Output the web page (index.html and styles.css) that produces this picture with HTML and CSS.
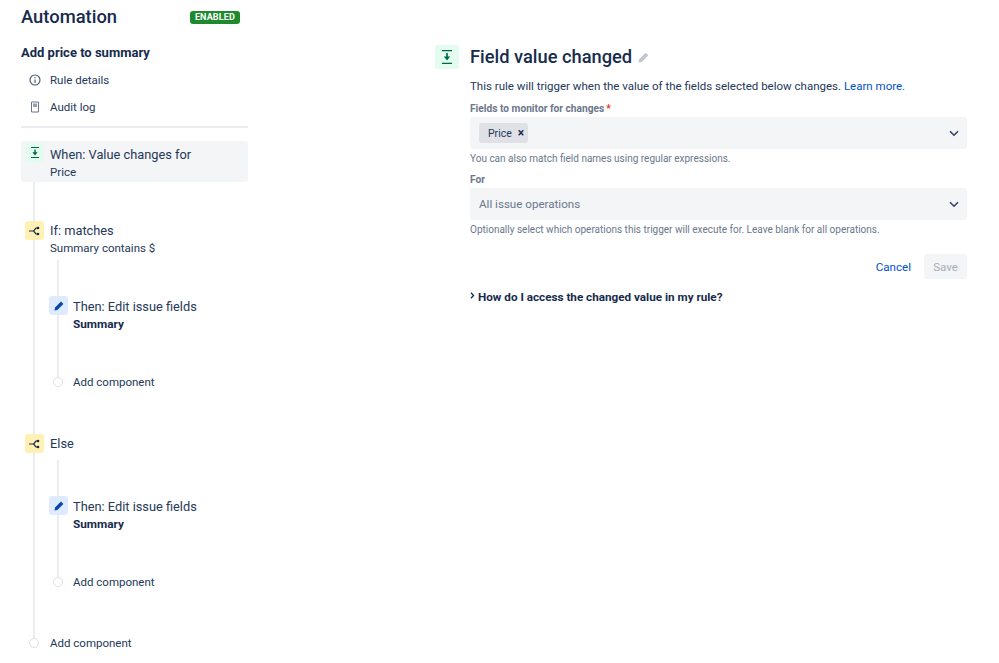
FILE: index.html
```html
<!DOCTYPE html>
<html lang="en">
  <head>
    <meta charset="UTF-8" />
    <meta name="viewport" content="width=device-width, initial-scale=1.0" />
    <title>Automation</title>
    <link rel="stylesheet" href="styles.css">
  </head>

  <body>
    <div class="page">
      <!-- rule outline -->
      <aside class="sidebar">
        <div class="sidebar-head">
          <h1>Automation</h1>
          <span class="badge">ENABLED</span>
        </div>
        <h2>Add price to summary</h2>
        <ul class="nav">
          <li>
            <svg width="12" height="12" viewBox="0 0 12 12" fill="none" stroke="#42526e" stroke-width="1.1">
              <circle cx="6" cy="6" r="5"/>
              <path d="M6 5.4V9M6 3v1.2"/>
            </svg>
            Rule details
          </li>
          <li>
            <svg width="12" height="12" viewBox="0 0 12 12" fill="none" stroke="#6b778c" stroke-width="1">
              <path d="M2.500 1h7v10h-7z"/>
              <path d="M4 2.500h4V6H4z" fill="#97a0af" stroke="none"/>
            </svg>
            Audit log
          </li>
        </ul>
        <hr />

        <div class="timeline">
          <div class="step step-active">
            <span class="icon icon-green">
              <svg width="10" height="11" viewBox="0 0 10 11" fill="#006644">
                <path d="M1 0h8v1H1zM1 10h8v1H1zM4.300 2.500h1.400v2.700H7.600L5 8.400 2.400 5.200h1.900z"/>
              </svg>
            </span>
            <div class="step-text">
              <div class="step-title">When: Value changes for</div>
              <div class="step-sub">Price</div>
            </div>
          </div>

          <div class="step step-if">
            <span class="icon icon-yellow">
              <svg width="11" height="10" viewBox="0 0 11 10" fill="none" stroke="#172b4d" stroke-width="1.200">
                <path d="M0 5h4.500M8.500 2H7L4.500 5 7 8h1.500"/>
                <circle cx="9" cy="2" r="1.300" fill="#172b4d" stroke="none"/>
                <circle cx="9" cy="8" r="1.300" fill="#172b4d" stroke="none"/>
              </svg>
            </span>
            <div>
              <div class="step-title">If: matches</div>
              <div class="step-sub">Summary contains $</div>
            </div>
          </div>
          <div class="branch">
            <div class="step">
              <span class="icon icon-blue">
                <svg width="10" height="10" viewBox="0 0 10 10" fill="#0747a6">
                  <path d="M7 .6l2.400 2.400-6 6L.5 9.500l.6-2.900z"/>
                </svg>
              </span>
              <div class="step-text">
                <div class="step-title">Then: Edit issue fields</div>
                <div class="step-sub step-bold">Summary</div>
              </div>
            </div>
            <div class="add add-inner"><span class="dot"></span>Add component</div>
          </div>

          <div class="step step-else">
            <span class="icon icon-yellow">
              <svg width="11" height="10" viewBox="0 0 11 10" fill="none" stroke="#172b4d" stroke-width="1.200">
                <path d="M0 5h4.500M8.500 2H7L4.500 5 7 8h1.500"/>
                <circle cx="9" cy="2" r="1.300" fill="#172b4d" stroke="none"/>
                <circle cx="9" cy="8" r="1.300" fill="#172b4d" stroke="none"/>
              </svg>
            </span>
            <div>
              <div class="step-title">Else</div>
            </div>
          </div>
          <div class="branch branch-else">
            <div class="step">
              <span class="icon icon-blue">
                <svg width="10" height="10" viewBox="0 0 10 10" fill="#0747a6">
                  <path d="M7 .6l2.400 2.400-6 6L.5 9.500l.6-2.900z"/>
                </svg>
              </span>
              <div class="step-text">
                <div class="step-title">Then: Edit issue fields</div>
                <div class="step-sub step-bold">Summary</div>
              </div>
            </div>
            <div class="add add-inner"><span class="dot"></span>Add component</div>
          </div>

          <div class="add add-outer"><span class="dot"></span>Add component</div>
        </div>
      </aside>

      <!-- trigger config -->
      <main class="panel">
        <span class="panel-icon">
          <svg width="12" height="14" viewBox="0 0 12 14" fill="#006644">
            <path d="M1 0h10v1.300H1zM1 12.700h10V14H1zM5.200 3h1.600v3.500h2.400L6 10.400 2.800 6.500h2.400z"/>
          </svg>
        </span>
        <div class="panel-body">
          <div class="panel-title">
            <h3>Field value changed</h3>
            <svg width="11" height="11" viewBox="0 0 10 10" fill="#c1c7d0">
              <path d="M7 .6l2.400 2.400-6 6L.5 9.500l.6-2.900z"/>
            </svg>
          </div>
          <p class="desc">This rule will trigger when the value of the fields selected below changes. <a href="#">Learn more.</a></p>

          <label class="label">Fields to monitor for changes<span class="req">*</span></label>
          <div class="select">
            <span class="tag">Price<span class="tag-x">&#215;</span></span>
            <svg class="chevron" width="10" height="7" viewBox="0 0 10 7" fill="none" stroke="#344563" stroke-width="1.600">
              <path d="M1 1.200l4 4 4-4"/>
            </svg>
          </div>
          <p class="hint">You can also match field names using regular expressions.</p>

          <label class="label">For</label>
          <div class="select">
            <span class="placeholder">All issue operations</span>
            <svg class="chevron" width="10" height="7" viewBox="0 0 10 7" fill="none" stroke="#344563" stroke-width="1.600">
              <path d="M1 1.200l4 4 4-4"/>
            </svg>
          </div>
          <p class="hint">Optionally select which operations this trigger will execute for. Leave blank for all operations.</p>

          <div class="actions">
            <a href="#" class="cancel">Cancel</a>
            <button type="button" class="save" disabled>Save</button>
          </div>

          <div class="expand">
            <svg class="expand-arrow" width="5" height="7" viewBox="0 0 5 7" fill="none" stroke="#172b4d" stroke-width="1.300">
              <path d="M1 .8l2.500 2.700L1 6.200"/>
            </svg>
            How do I access the changed value in my rule?
          </div>
        </div>
      </main>
    </div>
  </body>
</html>
```

FILE: styles.css
```css
* {
  box-sizing: border-box;
  margin: 0;
  padding: 0;
}

html,
body {
  height: 100%;
  overflow: hidden;
}

body {
  background: white;
  color: #172b4d;
  font-family: Roboto, "Liberation Sans", sans-serif;
  font-size: 13px;
}

a {
  color: #0052cc;
  text-decoration: none;
}

.page {
  display: flex;
  gap: 187px;
  padding-left: 21px;
}

/* sidebar */
.sidebar {
  width: 227px;
  flex-shrink: 0;
}

.sidebar-head {
  display: flex;
  align-items: center;
  justify-content: space-between;
  padding: 0 8px 2px 0;
  height: 36px;
}

.sidebar-head h1 {
  font-size: 18.400px;
  font-weight: 500;
  line-height: 22px;
}

.badge {
  background: #1f8a2d;
  color: white;
  border-radius: 3px;
  padding: 0 5px;
  font-size: 9px;
  font-weight: 700;
  line-height: 13px;
  letter-spacing: 0.15px;
}

.sidebar h2 {
  margin-top: 9px;
  font-size: 13px;
  font-weight: 700;
  line-height: 16px;
}

.nav {
  list-style: none;
  margin-top: 5px;
}

.nav li {
  display: flex;
  align-items: center;
  gap: 9px;
  height: 27px;
  padding-left: 8px;
  font-size: 11.500px;
  color: #253858;
}

hr {
  border: 0;
  height: 2px;
  background: #ebecf0;
  margin-top: 6px;
}

/* timeline */
.timeline {
  position: relative;
  margin-top: 13px;
}

.timeline::before {
  content: "";
  position: absolute;
  left: 12px;
  top: 20px;
  bottom: 10px;
  width: 2px;
  background: #ebecf0;
}

.step {
  position: relative;
  display: flex;
  gap: 5px;
  font-size: 12.800px;
}

.step-text {
  margin-top: 1px;
}

.step-active {
  background: #f4f5f7;
  border-radius: 3px;
  height: 41px;
  padding: 2px 0 0 4px;
  gap: 6px;
}

.step-active .step-text {
  margin-top: 2px;
}

.step-if {
  margin: 39px 0 0 4px;
  gap: 6px;
}

.step-else {
  margin: 0 0 0 4px;
  gap: 6px;
}

.step-title {
  line-height: 20px;
  color: #253858;
}

.step-sub {
  font-size: 11.500px;
  line-height: 15px;
  color: #253858;
}

.step-bold {
  font-size: 11.800px;
  font-weight: 700;
  color: #172b4d;
}

.icon {
  flex-shrink: 0;
  display: flex;
  align-items: center;
  justify-content: center;
  width: 19px;
  height: 19px;
  border-radius: 3px;
}

.icon-green {
  background: #e3fcef;
}

.icon-yellow {
  background: #fff0b3;
}

.icon-blue {
  background: #deebff;
}

.branch {
  position: relative;
  margin-left: 28px;
  padding-top: 40px;
}

.branch-else {
  padding-top: 42px;
}

.branch::before {
  content: "";
  position: absolute;
  left: 8px;
  top: 4px;
  bottom: 10px;
  width: 2px;
  background: #ebecf0;
}

.branch-else::before {
  top: 6px;
}

.add {
  position: relative;
  display: flex;
  align-items: center;
  height: 20px;
  font-size: 11.500px;
  color: #253858;
}

.dot {
  width: 10px;
  height: 10px;
  border-radius: 50%;
  border: 1px solid #dfe1e6;
  background: white;
}

.add-inner {
  margin: 40px 0 42px 4px;
  gap: 10px;
}

.branch-else .add-inner {
  margin-bottom: 41px;
}

.add-outer {
  margin: 40px 0 0 8px;
  gap: 11px;
}

/* right panel */
.panel {
  flex: 1;
  display: flex;
  gap: 11px;
  padding-top: 45px;
  padding-right: 32px;
}

.panel-icon {
  flex-shrink: 0;
  display: flex;
  align-items: center;
  justify-content: center;
  width: 24px;
  height: 24px;
  border-radius: 3px;
  background: #e3fcef;
}

.panel-body {
  flex: 1;
}

.panel-title {
  display: flex;
  align-items: center;
  gap: 6px;
  height: 24px;
}

.panel-title h3 {
  font-size: 18.300px;
  font-weight: 500;
  line-height: 24px;
}

.desc {
  margin-top: 8px;
  font-size: 11.500px;
  line-height: 18px;
  color: #253858;
}

.label {
  display: block;
  margin-top: 7px;
  font-size: 10.200px;
  font-weight: 700;
  line-height: 14px;
  color: #6b778c;
}

.req {
  color: #de350b;
  margin-left: 2px;
}

.select {
  display: flex;
  align-items: center;
  justify-content: space-between;
  height: 32px;
  margin-top: 1px;
  padding: 0 8px 0 9px;
  background: #f4f5f7;
  border-radius: 3px;
}

.tag {
  display: flex;
  align-items: center;
  height: 20px;
  padding: 0 4px 0 9px;
  border-radius: 3px;
  background: #dfe1e6;
  font-size: 10.500px;
  color: #253858;
}

.tag-x {
  margin-left: 6px;
  font-size: 12px;
  font-weight: 700;
  color: #172b4d;
}

.placeholder {
  font-size: 11.600px;
  color: #6b778c;
}

.hint {
  margin-top: 3px;
  font-size: 10px;
  line-height: 14px;
  color: #6b778c;
}

.actions {
  display: flex;
  align-items: center;
  justify-content: flex-end;
  gap: 13px;
  margin-top: 17px;
}

.cancel {
  font-size: 11.600px;
}

.save {
  width: 43px;
  height: 25px;
  border: 0;
  border-radius: 3px;
  background: #f4f5f7;
  color: #a5adba;
  font-family: inherit;
  font-size: 11.500px;
}

.expand {
  display: flex;
  align-items: center;
  gap: 3px;
  margin-top: 10px;
  font-size: 11.700px;
  font-weight: 700;
  line-height: 16px;
}

.expand-arrow {
  margin-bottom: 3px;
}
```
